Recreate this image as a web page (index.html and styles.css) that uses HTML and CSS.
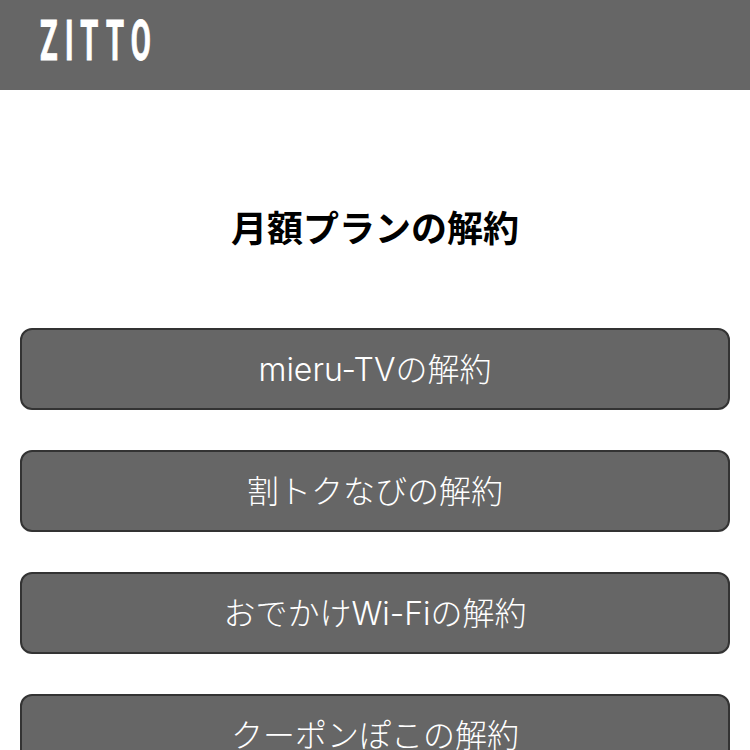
FILE: index.html
```html
<!DOCTYPE html>
<html lang="ja">
<head>
  <meta charset="UTF-8">
  <meta name="viewport" content="width=device-width, initial-scale=1.0">
  <title>月額プランの解約</title>
  <link rel="stylesheet" href="styles.css">
</head>
<body>

<header class="site-header">
  <span class="logo">ZITTO</span>
</header>

<main class="cancel">
  <h1 class="cancel-title">月額プランの解約</h1>
  <div class="plan-list">
    <a class="plan-button" href="#">mieru-TVの解約</a>
    <a class="plan-button" href="#">割トクなびの解約</a>
    <a class="plan-button" href="#">おでかけWi-Fiの解約</a>
    <a class="plan-button" href="#">クーポンぽこの解約</a>
  </div>
</main>

</body>
</html>
```

FILE: styles.css
```css
body {
  margin: 0;
  padding: 0;
  background-color: #fff;
  font-family: "Noto Sans CJK JP", "Noto Sans", sans-serif;
  overflow: hidden;
}
.site-header {
  height: 82px;
  padding: 0 0 8px 40px;
  background-color: #666;
  display: flex;
  align-items: center;
}
.logo {
  color: #fff;
  font-family: "Roboto", sans-serif;
  font-size: 56px;
  font-weight: 700;
  line-height: 80px;
  letter-spacing: 14px;
  -webkit-text-stroke: 1px #fff;
  transform: scaleX(0.52);
  transform-origin: left center;
}
.cancel {
  padding: 0 20px;
}
.cancel-title {
  margin: 0;
  padding: 112px 0 78px;
  font-size: 36px;
  line-height: 48px;
  font-weight: 700;
  color: #000;
  text-align: center;
}
.plan-list {
  display: flex;
  flex-direction: column;
  gap: 40px;
}
.plan-button {
  display: block;
  height: 78px;
  border: 2px solid #333;
  border-radius: 12px;
  background-color: #666;
  color: #fff;
  font-family: "Inter", "Noto Sans CJK JP", sans-serif;
  font-size: 32px;
  font-weight: 300;
  line-height: 80px;
  text-align: center;
  text-decoration: none;
}
```
